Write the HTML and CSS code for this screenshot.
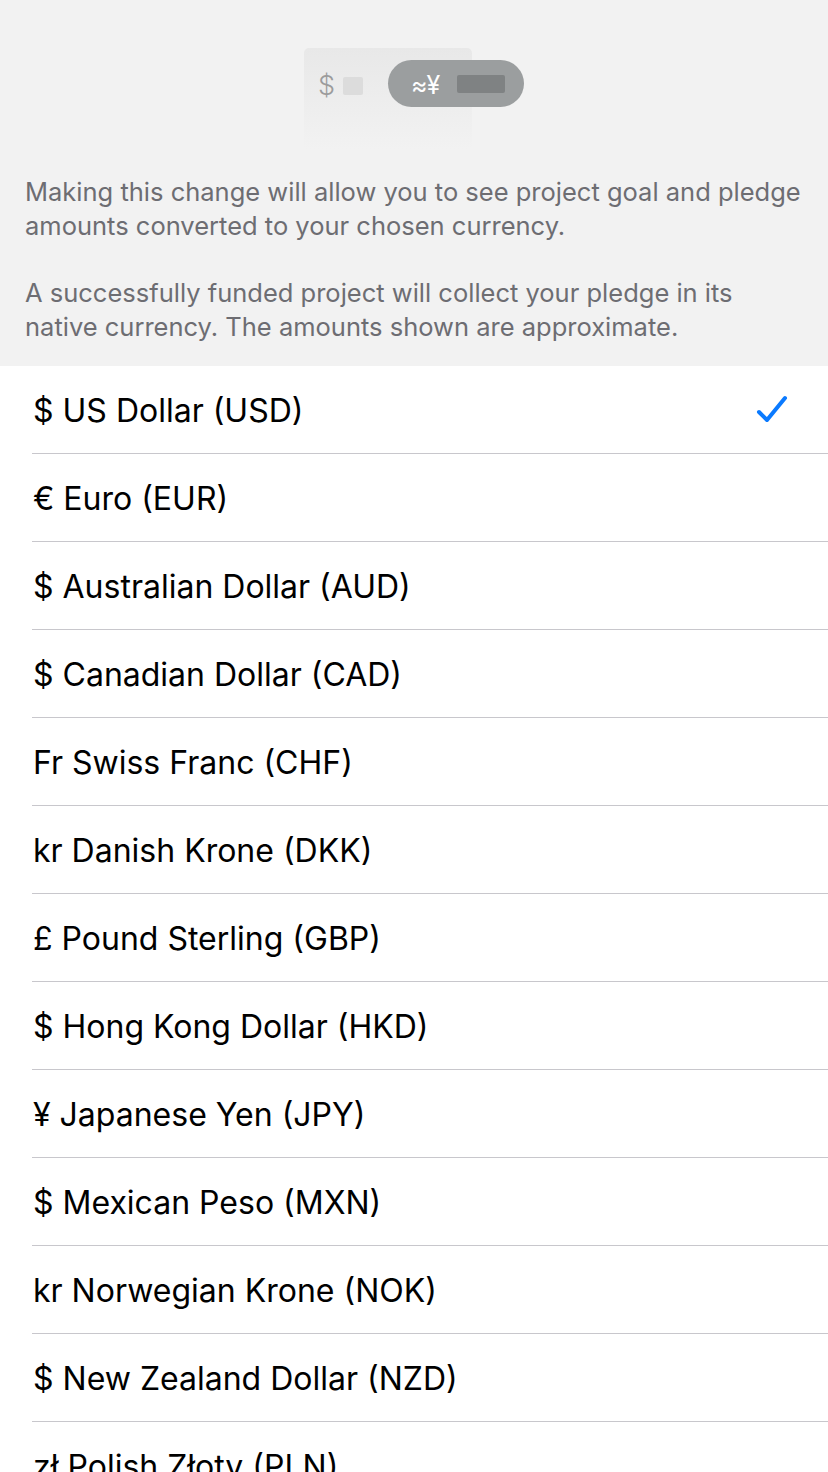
FILE: index.html
```html
<!DOCTYPE html>
<html>
<head>
<meta charset="utf-8">
<link rel="stylesheet" href="styles.css">
</head>
<body>
<div class="header">
  <div class="illus">
    <div class="card">
      <span class="card-dollar">$</span>
      <span class="card-box"></span>
    </div>
    <div class="pill">
      <span class="pill-sym">≈¥</span>
      <span class="pill-box"></span>
    </div>
  </div>
  <p class="note">Making this change will allow you to see project goal and pledge amounts converted to your chosen currency.</p>
  <p class="note">A successfully funded project will collect your pledge in its native currency. The amounts shown are approximate.</p>
</div>
<ul class="list">
  <li class="row"><span class="label">$ US Dollar (USD)</span><svg class="check" width="32" height="30" viewBox="0 0 32 30"><path d="M3 17 L11 25 L29 3" fill="none" stroke="#0a7aff" stroke-width="4" stroke-linecap="round" stroke-linejoin="round"/></svg></li>
  <li class="row"><span class="label">€ Euro (EUR)</span></li>
  <li class="row"><span class="label">$ Australian Dollar (AUD)</span></li>
  <li class="row"><span class="label">$ Canadian Dollar (CAD)</span></li>
  <li class="row"><span class="label">Fr Swiss Franc (CHF)</span></li>
  <li class="row"><span class="label">kr Danish Krone (DKK)</span></li>
  <li class="row"><span class="label">£ Pound Sterling (GBP)</span></li>
  <li class="row"><span class="label">$ Hong Kong Dollar (HKD)</span></li>
  <li class="row"><span class="label">¥ Japanese Yen (JPY)</span></li>
  <li class="row"><span class="label">$ Mexican Peso (MXN)</span></li>
  <li class="row"><span class="label">kr Norwegian Krone (NOK)</span></li>
  <li class="row"><span class="label">$ New Zealand Dollar (NZD)</span></li>
  <li class="row"><span class="label">zł Polish Złoty (PLN)</span></li>
</ul>
</body>
</html>
```
FILE: styles.css
```css
html, body {
  margin: 0;
  padding: 0;
  background: #ffffff;
  font-family: Inter, "Noto Sans", sans-serif;
  height: 1472px;
  overflow: hidden;
}
.header {
  background: #f2f2f2;
  height: 366px;
  box-sizing: border-box;
  padding: 48px 25px 0 25px;
}
.illus {
  display: flex;
  align-items: flex-start;
  margin-left: 279px;
  height: 102px;
  position: relative;
}
.card {
  width: 168px;
  height: 102px;
  border-radius: 5px;
  background: linear-gradient(#e8e8e8, #f2f2f2);
  display: flex;
  align-items: flex-start;
  padding: 25px 0 0 14px;
  box-sizing: border-box;
  gap: 8px;
}
.card-dollar {
  color: #9c9c9c;
  font-size: 27px;
  line-height: 26px;
  font-weight: 300;
}
.card-box {
  width: 20px;
  height: 18px;
  margin-top: 4px;
  background: #dcdcdc;
  border-radius: 2px;
}
.pill {
  position: absolute;
  left: 84px;
  top: 12px;
  width: 136px;
  height: 47px;
  border-radius: 24px;
  background: #9b9e9f;
  display: flex;
  align-items: center;
  padding-left: 23px;
  box-sizing: border-box;
  gap: 18px;
}
.pill-sym {
  color: #ffffff;
  font-size: 25px;
  line-height: 28px;
  letter-spacing: -1px;
  padding-top: 2px;
}
.pill-box {
  width: 48px;
  height: 18px;
  background: #7f8283;
  border-radius: 2px;
}
.note {
  margin: 0;
  color: #6d6d72;
  font-size: 25.5px;
  line-height: 34px;
}
.note + .note {
  margin-top: 33px;
}
.illus + .note {
  margin-top: 25px;
}
.list {
  list-style: none;
  margin: 0;
  padding: 0 0 0 32px;
}
.row {
  height: 88px;
  display: flex;
  align-items: center;
  justify-content: space-between;
  border-bottom: 1px solid #c8c7cc;
  box-sizing: border-box;
  padding-left: 1px;
  padding-right: 40px;
}
.label {
  color: #000000;
  font-size: 32px;
  padding-top: 2px;
}
.check {
  display: block;
}
```
